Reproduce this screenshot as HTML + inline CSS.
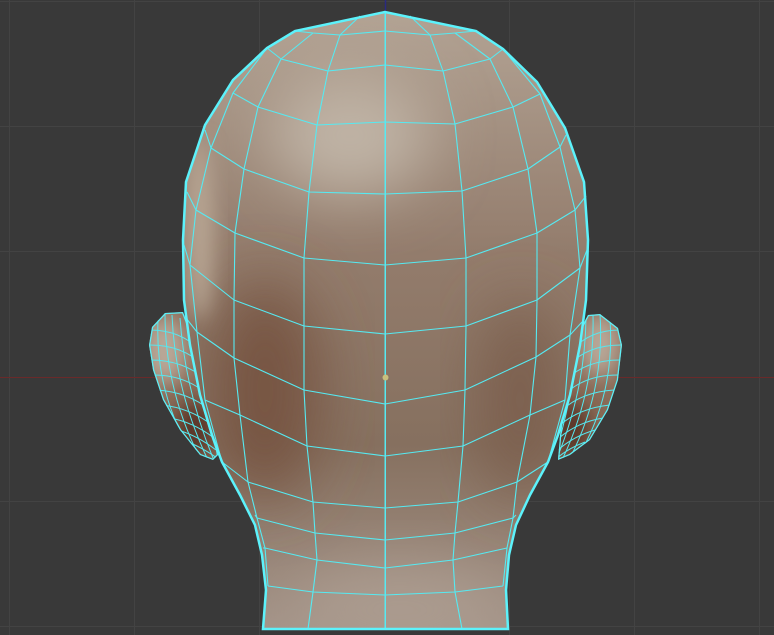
<!DOCTYPE html>
<html><head><meta charset="utf-8"><style>
html,body{margin:0;padding:0;background:#393939;overflow:hidden}
svg{display:block}
</style></head><body>
<svg width="774" height="635" viewBox="0 0 774 635" xmlns="http://www.w3.org/2000/svg">
<defs>
<linearGradient id="base" x1="0" y1="0" x2="0" y2="1">
<stop offset="0" stop-color="#b4a596"/>
<stop offset="0.4" stop-color="#937c6c"/>
<stop offset="0.7" stop-color="#86705f"/>
<stop offset="1" stop-color="#a5958a"/>
</linearGradient>
<filter id="bl" x="-50%" y="-50%" width="200%" height="200%"><feGaussianBlur stdDeviation="30"/></filter>
<filter id="bl2" x="-50%" y="-50%" width="200%" height="200%"><feGaussianBlur stdDeviation="10"/></filter>
<clipPath id="head"><path id="hp" d="M385,12 L295,31 L267,48 L233,80 L205,125 L186,182 L183,240 L184,300 L190,345 L200,395 L212,435 L222,462 L240,495 L255,525 L262,555 L266,590 L263,629 L508,629 L506,590 L509,555 L516,525 L530,495 L548,462 L558,435 L570,395 L580,345 L586,300 L588,240 L584,182 L565,128 L537,82 L503,49 L476,31 Z"/></clipPath>
<clipPath id="earL"><path d="M165,313 L152,327 L149,345 L153,370 L163,400 L180,430 L200,455 L213,460 L218,455 L207,388 L193,338 L183,312 Z"/></clipPath>
<clipPath id="earR"><path d="M600,314 L618,328 L622,345 L618,380 L608,410 L590,440 L570,455 L558,460 L563,400 L575,340 L588,315 Z"/></clipPath>
</defs>
<g stroke="#434343" stroke-width="1">
<line x1="9.5" y1="0" x2="9.5" y2="635"/><line x1="134.5" y1="0" x2="134.5" y2="635"/><line x1="259.5" y1="0" x2="259.5" y2="635"/><line x1="509.5" y1="0" x2="509.5" y2="635"/><line x1="634.5" y1="0" x2="634.5" y2="635"/><line x1="759.5" y1="0" x2="759.5" y2="635"/>
<line x1="0" y1="1.5" x2="774" y2="1.5"/><line x1="0" y1="126.5" x2="774" y2="126.5"/><line x1="0" y1="251.5" x2="774" y2="251.5"/><line x1="0" y1="501.5" x2="774" y2="501.5"/><line x1="0" y1="626.5" x2="774" y2="626.5"/>
</g>
<line x1="0" y1="377.5" x2="774" y2="377.5" stroke="#6a2a2a" stroke-width="1"/>
<line x1="385.5" y1="0" x2="385.5" y2="14" stroke="#2a2a80" stroke-width="1.5"/>

<g clip-path="url(#earL)">
<rect x="140" y="305" width="90" height="165" fill="#8a6b58"/>
<ellipse cx="165" cy="350" rx="22" ry="35" fill="#b9a898" filter="url(#bl2)"/>
<ellipse cx="195" cy="430" rx="20" ry="30" fill="#5a3626" filter="url(#bl2)"/>
<g stroke="#55e8f0" stroke-width="1" fill="none">
<path d="M150,330 Q180,330 200,350"/><path d="M150,345 Q182,345 203,365"/><path d="M150,360 Q184,360 206,380"/><path d="M153,375 Q186,375 208,395"/><path d="M157,390 Q188,392 210,410"/><path d="M162,405 Q190,408 212,425"/><path d="M170,418 Q193,422 214,438"/><path d="M178,430 Q198,436 216,450"/><path d="M188,442 Q203,448 217,458"/>
<path d="M165,313 Q165,390 200,458"/><path d="M172,315 Q175,390 207,458"/><path d="M180,318 Q185,390 213,458"/><path d="M158,320 Q155,390 190,450"/><path d="M188,325 Q195,390 218,455"/>
</g>
<path d="M165,313 L152,327 L149,345 L153,370 L163,400 L180,430 L200,455 L213,460 L218,455 L207,388 L193,338 L183,312 Z" fill="none" stroke="#5cf0f8" stroke-width="2.5"/>
</g>
<g clip-path="url(#earR)">
<rect x="550" y="305" width="80" height="165" fill="#8a6b58"/>
<ellipse cx="600" cy="345" rx="20" ry="32" fill="#b9a898" filter="url(#bl2)"/>
<ellipse cx="570" cy="430" rx="20" ry="30" fill="#5a3626" filter="url(#bl2)"/>
<g stroke="#55e8f0" stroke-width="1" fill="none">
<path d="M620,330 Q590,330 572,350"/><path d="M621,345 Q588,345 569,365"/><path d="M620,360 Q586,360 566,380"/><path d="M618,375 Q584,375 564,395"/><path d="M614,390 Q582,392 562,410"/><path d="M610,405 Q580,408 560,425"/><path d="M603,418 Q578,422 559,438"/><path d="M595,430 Q574,436 558,450"/><path d="M585,442 Q569,448 557,458"/>
<path d="M600,314 Q605,390 570,458"/><path d="M593,315 Q595,390 563,458"/><path d="M586,318 Q585,390 557,458"/><path d="M610,320 Q615,390 582,450"/><path d="M579,325 Q575,390 555,455"/>
</g>
<path d="M600,314 L618,328 L622,345 L618,380 L608,410 L590,440 L570,455 L558,460 L563,400 L575,340 L588,315 Z" fill="none" stroke="#5cf0f8" stroke-width="2.5"/>
</g>

<g clip-path="url(#head)">
<rect x="150" y="0" width="470" height="635" fill="url(#base)"/>
<ellipse cx="350" cy="135" rx="80" ry="60" fill="#bfb3a5" filter="url(#bl)"/>
<ellipse cx="265" cy="390" rx="55" ry="110" fill="#775443" filter="url(#bl)"/>
<ellipse cx="520" cy="400" rx="40" ry="100" fill="#7c5e4e" filter="url(#bl)"/>
<ellipse cx="400" cy="610" rx="110" ry="45" fill="#ab9b8f" filter="url(#bl)"/>
<ellipse cx="200" cy="230" rx="14" ry="90" fill="#b7a593" filter="url(#bl2)"/>
</g>

<g stroke="#55eaf2" stroke-width="1.1" fill="none" stroke-linejoin="round">
<polyline points="295,31 313,33 340,35 385,31 430,35 455,33 476,31"/>
<polyline points="267,48 281,59 328,71 385,65 443,71 490,59 503,49"/>
<polyline points="233,93 258,107 317,125 385,122 455,124 513,107 540,94"/>
<polyline points="205,130 211,148 244,169 309,192 385,194 462,191 528,169 560,147 566,135"/>
<polyline points="187,192 196,210 235,233 304,258 385,265 466,258 537,233 575,210 586,196"/>
<polyline points="184,245 190,265 234,300 304,326 385,334 466,326 537,300 580,268 587,250"/>
<polyline points="186,318 197,332 234,358 304,390 385,404 465,390 536,357 570,335 582,322"/>
<polyline points="205,400 240,415 307,446 385,456 463,446 530,415 565,400"/>
<polyline points="222,462 248,482 313,502 385,508 458,502 517,482 548,462"/>
<polyline points="255,515 257,518 315,533 385,540 455,533 513,518 516,515"/>
<polyline points="263,548 265,548 317,560 385,568 453,560 507,548"/>
<polyline points="268,586 313,592 385,595 455,592 503,586"/>
<rect x="384.5" y="12" width="1.5" height="617" fill="#55eaf2" stroke="none"/>
<polyline points="360,16 340,35 328,71 317,125 309,192 304,258 304,326 304,390 307,446 313,502 315,533 317,560 313,592 308,629"/>
<polyline points="410,16 430,35 443,71 455,124 462,191 466,258 466,326 465,390 463,446 458,502 455,533 453,560 455,592 462,629"/>
<polyline points="313,33 281,59 258,107 244,169 235,233 234,300 234,358 240,415 248,482 257,518 265,548 268,586"/>
<polyline points="455,33 490,59 513,107 528,169 537,233 537,300 536,357 530,415 517,482 513,518 507,548 503,586"/>
<polyline points="267,48 233,93 211,148 196,210 190,265 197,332 205,400 222,462"/>
<polyline points="503,49 540,94 560,147 575,210 580,268 570,335 565,400 548,462"/>
</g>
<use href="#hp" fill="none" stroke="#5cf2fb" stroke-width="2.5"/>
<circle cx="385.5" cy="377.5" r="3" fill="#c9bf7e"/>
</svg>
</body></html>
